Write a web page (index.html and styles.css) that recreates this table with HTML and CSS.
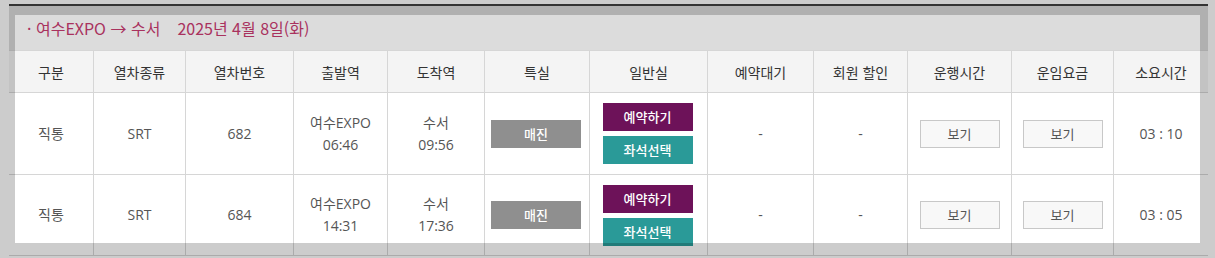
FILE: index.html
```html
<!DOCTYPE html>
<html lang="ko">
<head>
<meta charset="utf-8">
<title>열차 조회 결과</title>
<link rel="stylesheet" href="styles.css">
</head>
<body>
<div class="result">
  <div class="caption">· 여수EXPO → 수서<span class="date">2025년 4월 8일(화)</span></div>
  <table class="trains">
    <colgroup>
      <col class="w1"><col class="w2"><col class="w3"><col class="w4"><col class="w5"><col class="w6">
      <col class="w7"><col class="w8"><col class="w9"><col class="w10"><col class="w11"><col class="w12">
    </colgroup>
    <thead>
      <tr>
        <th>구분</th><th>열차종류</th><th>열차번호</th><th>출발역</th><th>도착역</th><th>특실</th>
        <th>일반실</th><th>예약대기</th><th>회원 할인</th><th>운행시간</th><th>운임요금</th><th>소요시간</th>
      </tr>
    </thead>
    <tbody>
      <tr class="r1">
        <td>직통</td><td>SRT</td><td>682</td>
        <td>여수EXPO<br>06:46</td><td>수서<br>09:56</td>
        <td><span class="btn soldout">매진</span></td>
        <td><div class="stack"><a class="btn reserve">예약하기</a><a class="btn seat">좌석선택</a></div></td>
        <td>-</td><td>-</td>
        <td><a class="btn view">보기</a></td><td><a class="btn view">보기</a></td>
        <td>03 : 10</td>
      </tr>
      <tr class="r2">
        <td>직통</td><td>SRT</td><td>684</td>
        <td>여수EXPO<br>14:31</td><td>수서<br>17:36</td>
        <td><span class="btn soldout">매진</span></td>
        <td><div class="stack"><a class="btn reserve">예약하기</a><a class="btn seat">좌석선택</a></div></td>
        <td>-</td><td>-</td>
        <td><a class="btn view">보기</a></td><td><a class="btn view">보기</a></td>
        <td>03 : 05</td>
      </tr>
    </tbody>
  </table>
</div>
<div class="spotlight"></div>
</body>
</html>
```

FILE: styles.css
```css
html, body {
  margin: 0;
  padding: 0;
  background: #fff;
  width: 1215px;
  height: 258px;
  overflow: hidden;
}
body {
  font-family: "Open Sans", "Noto Sans CJK KR", sans-serif;
  font-size: 14px;
  color: #555;
}
.result {
  width: 1199px;
  margin: 4px 0 0 9px;
  border-top: 2px solid #404040;
}
.caption {
  height: 44px;
  line-height: 44px;
  background: #dcdcdc;
  padding-left: 18px;
  color: #a9325e;
  font-size: 16px;
  font-family: "Noto Sans CJK KR", "Open Sans", sans-serif;
}
.caption .date {
  margin-left: 17px;
}
.trains {
  width: 1199px;
  table-layout: fixed;
  border-collapse: separate;
  border-spacing: 0;
  border-top: 1px solid #d6d6d6;
}
.w1 { width: 84px; }
.w2 { width: 92px; }
.w3 { width: 108px; }
.w4 { width: 94px; }
.w5 { width: 97px; }
.w6 { width: 105px; }
.w7 { width: 118px; }
.w8 { width: 106px; }
.w9 { width: 94px; }
.w10 { width: 104px; }
.w11 { width: 102px; }
.w12 { width: 95px; }
.trains th, .trains td {
  box-sizing: border-box;
  padding: 0;
  text-align: center;
  vertical-align: middle;
  border-bottom: 1px solid #d6d6d6;
  border-left: 1px solid #d6d6d6;
}
.trains th:first-child, .trains td:first-child {
  border-left: none;
}
.trains th {
  height: 42px;
  background: #f4f4f4;
  color: #333;
  font-weight: normal;
  font-family: "Noto Sans CJK KR", sans-serif;
}
.trains td {
  line-height: 22px;
}
.r1 td { height: 82px; }
.r2 td { height: 81px; }
.btn {
  display: inline-block;
  box-sizing: border-box;
  width: 90px;
  height: 28px;
  line-height: 28px;
  font-size: 13px;
  font-family: "Noto Sans CJK KR", sans-serif;
  text-align: center;
  vertical-align: middle;
  text-decoration: none;
}
.soldout {
  background: #8f8f8f;
  color: #fff;
  font-weight: 500;
  margin-left: -2px;
}
.stack {
  display: flex;
  flex-direction: column;
  align-items: center;
  gap: 5px;
  margin-left: -2px;
}
.reserve {
  background: #6d1259;
  color: #fff;
  font-weight: 500;
}
.seat {
  background: #2a9a98;
  color: #fff;
  font-weight: 500;
}
.view {
  width: 80px;
  line-height: 26px;
  border: 1px solid #c8c8c8;
  background: #f8f8f8;
  color: #555;
}
.spotlight {
  position: fixed;
  left: 15px;
  top: 15px;
  width: 1185px;
  height: 228px;
  box-shadow: 0 0 0 2000px rgba(0, 0, 0, 0.2);
  pointer-events: none;
}
```
